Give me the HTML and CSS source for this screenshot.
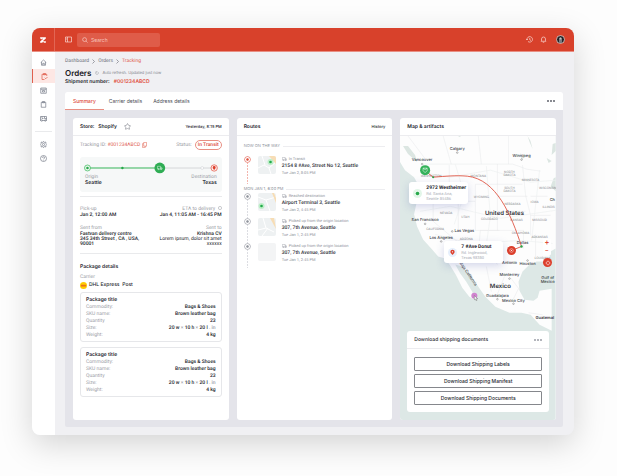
FILE: index.html
```html
<!DOCTYPE html>
<html lang="en">
<head>
<meta charset="utf-8">
<title>Orders</title>
<link rel="stylesheet" href="styles.css">
</head>
<body>
<svg class="defs" aria-hidden="true">
  <symbol id="truck" viewBox="0 0 16 12"><path d="M1 1h9v8H1zM10 4h3l2 3v2h-5"/><circle cx="4.500" cy="9.500" r="1.500"/><circle cx="12" cy="9.500" r="1.500"/></symbol>
  <symbol id="ring" viewBox="0 0 14 14"><circle cx="7" cy="7" r="6"/><circle cx="7" cy="7" r="2" fill="currentColor"/></symbol>
  <symbol id="pin" viewBox="0 0 12 14"><path d="M6 13C3 10 1 8 1 5.500a5 5 0 0 1 10 0C11 8 9 10 6 13z" fill="currentColor"/><circle cx="6" cy="5.500" r="1.500" fill="#fff" stroke="none"/></symbol>
</svg>
<div class="window">
  <header class="topbar">
    <a class="logo" href="#" aria-label="Home"><svg viewBox="0 0 14 14"><path d="M2 2h10v2.500L6.500 9H12v3h-3L7.500 10.500 5 12H2V9.500L7.500 5H5L4 6 2 4z" fill="#fff"/></svg></a>
    <button class="icon-btn" aria-label="Toggle sidebar"><svg viewBox="0 0 14 14"><path d="M1 2h12v10H1zM5 2v10M3 5h1M3 7h1"/></svg></button>
    <label class="search"><svg viewBox="0 0 14 14"><circle cx="6" cy="6" r="4.500"/><path d="M9.500 9.500 13 13"/></svg><input type="search" placeholder="Search" aria-label="Search"></label>
    <div class="actions">
      <button class="icon-btn" aria-label="History"><svg viewBox="0 0 14 14"><path d="M2 7a5.500 5.500 0 1 1 2 4M0 6l2 2 2-2M7.500 4v3.500L10 9"/></svg></button>
      <button class="icon-btn" aria-label="Notifications"><svg viewBox="0 0 14 14"><path d="M2 10.500h10L11 9V6a4 4 0 0 0-8 0v3zM5.500 12.500h3"/></svg></button>
      <button class="avatar" aria-label="Account"><svg viewBox="0 0 18 18"><circle cx="9" cy="9" r="8" fill="#222327" stroke="#f3d7d2" stroke-width="1.500"/><path d="M6 16V8a3 3 0 0 1 6 0v8" fill="#777a80"/><circle cx="9" cy="7" r="2" fill="#c4c4c4"/></svg></button>
    </div>
  </header>
  <div class="body">
    <nav class="sidebar" aria-label="Main">
      <a href="#" aria-label="Home"><svg viewBox="0 0 14 14"><path d="M1.500 7 7 2l5.500 5M3 6v6.500h8V6M5.500 12V8.500h3V12"/></svg></a>
      <a href="#" class="active" aria-label="Orders"><svg viewBox="0 0 14 14"><path d="M7 13H2V2.500h9.500V6M5 1h4v2.500H5zM7.500 9.500l2 2L13 8"/></svg></a>
      <a href="#" aria-label="Products"><svg viewBox="0 0 14 14"><path d="M1.500 2h11v10.500h-11zM1.500 4.500h11M5 7h4v3H5z"/></svg></a>
      <a href="#" aria-label="Lists"><svg viewBox="0 0 14 14"><path d="M2.500 2.500h9v10h-9zM5 1h4v2.500H5z"/></svg></a>
      <a href="#" aria-label="Shipping"><svg viewBox="0 0 14 14"><path d="M1 11V3h12v8h-2M5 11h4M1 11h1M9 3v4h4M4 3v4h3"/><circle cx="3.500" cy="11" r="1.500"/><circle cx="10.500" cy="11" r="1.500"/></svg></a>
      <hr>
      <a href="#" aria-label="Settings"><svg viewBox="0 0 14 14"><path d="M7 .8l1.500 2L11.500 2l.3 3L13.500 7l-1.700 2-.3 3-3-.8L7 13.200l-1.500-2-3 .8-.3-3L.5 7l1.700-2 .3-3 3 .8z"/><circle cx="7" cy="7" r="2.200"/></svg></a>
      <a href="#" aria-label="Help"><svg viewBox="0 0 14 14"><circle cx="7" cy="7" r="6"/><path d="M5 5.500a2 2 0 1 1 2.500 2L7 8.500M7 10v1"/></svg></a>
    </nav>
    <main>
      <nav class="crumbs" aria-label="Breadcrumb"><a href="#">Dashboard</a><svg viewBox="0 0 6 10"><path d="M1 1l4 4-4 4"/></svg><a href="#">Orders</a><svg viewBox="0 0 6 10"><path d="M1 1l4 4-4 4"/></svg><a href="#" class="here">Tracking</a></nav>
      <div class="title"><h1>Orders</h1><svg viewBox="0 0 14 14"><path d="M4 3a5 5 0 1 0 5-.5M4 0v4h4"/></svg><small>Auto refresh. Updated just now</small></div>
      <p class="shipment">Shipment number: <b>#001234ABCD</b></p>
      <section class="board">
        <div class="tabs"><button class="on">Summary</button><button>Carrier details</button><button>Address details</button><button class="more" aria-label="More"><i></i><i></i><i></i></button></div>
        <div class="columns">
          <article class="card">
            <header><h2>Store: &nbsp; Shopify</h2><svg class="star" viewBox="0 0 14 14"><path d="M7 1l2 3.500 4 1-2.500 3 .5 4L7 11l-4 1.500.5-4L1 5.500l4-1z"/></svg><time>Yesterday, 8:15 PM</time></header>
            <div class="store">
              <div class="row track"><span>Tracking ID: <a href="#">#001234ABCD</a></span><svg class="copy" viewBox="0 0 12 14"><path d="M4 1h7v9H4zM4 4H1v9h7v-3"/></svg><span class="status">Status: <b>In Transit</b></span></div>
              <div class="progress">
                <svg viewBox="0 0 142 12"><path d="M7 6h73" stroke="#35b558"/><path d="M80 6h54" stroke="#d5d8da"/><circle cx="7.500" cy="6" r="3" fill="#e8f8ec" stroke="#35b558" stroke-width=".7"/><circle cx="7.500" cy="6" r="1.300" fill="#27a84a"/><circle cx="42.500" cy="6" r="1.200" fill="#27a84a"/><circle cx="80" cy="6" r="5.400" fill="#2fad54"/><g class="wtruck"><use href="#truck" x="77" y="4" width="6" height="4"/></g><circle cx="122.500" cy="6" r="1.400" fill="#fff" stroke="#cfd2d5" stroke-width=".6"/><circle cx="134.500" cy="6" r="3.200" fill="#fdeeec" stroke="#e2503f" stroke-width=".7"/><path d="M134.500 8C133 6.500 133 6 133 5.500a1.500 1.500 0 0 1 3 0c0 .5 0 1-1.500 2.500z" fill="#dc3f2c"/></svg>
                <div class="ends"><div><span>Origin</span><strong>Seattle</strong></div><div class="right"><span>Destination</span><strong>Texas</strong></div></div>
              </div>
              <hr>
              <div class="pair"><div><span>Pick-up</span><b>Jan 2, 12:00 AM</b></div><div class="right"><span>ETA to delivery &nbsp;<svg class="info" viewBox="0 0 10 10"><circle cx="5" cy="5" r="4"/></svg></span><b>Jan 4, 11:05 AM - 16:45 PM</b></div></div>
              <div class="pair addr"><div><span>Sent from</span><b>Fastvan delivery centre<br>345 34th Street , CA , USA,<br>90001</b></div><div class="right"><span>Sent to</span><b>Krishna CV</b><p>Lorem ipsum, dolor sit amet<br>xxxxxx</p></div></div>
              <hr>
              <h3>Package details</h3>
              <p class="muted">Carrier</p>
              <p class="carrier"><svg viewBox="0 0 14 14"><circle cx="7" cy="7" r="7" fill="#ffcc00"/><path d="M2 6.500h10M2 8h10" stroke="#e0432f"/></svg>DHL Express &nbsp;Post</p>
              <section class="package"><h4>Package title</h4><dl><dt>Commodity:</dt><dd>Bags &amp; Shoes</dd><dt>SKU name:</dt><dd>Brown leather bag</dd><dt>Quantity</dt><dd>23</dd><dt>Size:</dt><dd>20 w <i>×</i> 10 h <i>×</i> 20 l <i>. in</i></dd><dt>Weight:</dt><dd>4 kg</dd></dl></section>
              <section class="package"><h4>Package title</h4><dl><dt>Commodity:</dt><dd>Bags &amp; Shoes</dd><dt>SKU name:</dt><dd>Brown leather bag</dd><dt>Quantity</dt><dd>23</dd><dt>Size:</dt><dd>20 w <i>×</i> 10 h <i>×</i> 20 l <i>. in</i></dd><dt>Weight:</dt><dd>4 kg</dd></dl></section>
            </div>
          </article>
          <article class="card">
            <header><h2>Routes</h2><a href="#" class="history">History</a></header>
            <div class="routes">
              <h3>NOW ON THE WAY</h3>
              <ol>
                <li class="current"><svg class="dot" viewBox="0 0 14 14"><use href="#ring"/></svg><svg class="thumb" viewBox="0 0 18 18"><rect width="18" height="18" fill="#eef1f2"/><path d="M0 12l6-3 5 3 7-6M7 9L4 0M11 12l2 6" class="road"/><path d="M11 0h7v8z" fill="#f7ddb5"/><circle cx="12.500" cy="6" r="3" fill="#bdeec8"/><circle cx="12.500" cy="6" r="1.300" fill="#20aa48"/></svg><div><span><svg class="tr"><use href="#truck"/></svg>In Transit</span><b>2154 8 #Ave, Street No 12, Seattle</b><time>Tue Jan 2, 8:05 PM</time></div></li>
              </ol>
              <h3>MON JAN 1, 6:00 PM</h3>
              <ol>
                <li><svg class="dot" viewBox="0 0 14 14"><use href="#ring"/></svg><svg class="thumb" viewBox="0 0 18 18"><rect width="18" height="18" fill="#eef1f2"/><path d="M0 4l8 3 10-3M8 7l4 11" class="road"/><path d="M14 0h2l2 5v5z" fill="#f7ddb5"/><circle cx="3.500" cy="13" r="3" fill="#bdeec8"/><circle cx="3.500" cy="13" r="1.300" fill="#20aa48"/></svg><div><span><svg class="tr"><use href="#truck"/></svg>Reached destination</span><b>Airport Terminal 3, Seattle</b><time>Tue Jan 2, 4:45 PM</time></div></li>
                <li><svg class="dot" viewBox="0 0 14 14"><use href="#ring"/></svg><svg class="thumb" viewBox="0 0 18 18"><rect width="18" height="18" fill="#eef1f2"/><path d="M0 12l8-2 8 4M8 10L5 0M4 18l6-8" class="road"/><path d="M12 0h4l2 11z" fill="#f7ddb5"/></svg><div><span><svg class="tr"><use href="#truck"/></svg>Picked up from the origin location</span><b>307, 7th Avenue, Seattle</b><time>Tue Jan 1, 2:45 PM</time></div></li>
                <li><svg class="dot" viewBox="0 0 14 14"><use href="#ring"/></svg><svg class="thumb" viewBox="0 0 18 18"><rect width="18" height="18" fill="#f3f4f5"/></svg><div><span><svg class="tr"><use href="#truck"/></svg>Picked up from the origin location</span><b>307, 7th Avenue, Seattle</b><time>Tue Jan 1, 2:45 PM</time></div></li>
              </ol>
            </div>
          </article>
          <article class="card">
            <header><h2>Map &amp; artifacts</h2></header>
            <div class="map">
              <svg class="canvas" viewBox="0 0 155 284" preserveAspectRatio="xMidYMin slice" role="img" aria-label="Route from Washington to Texas">
                <rect width="155" height="284" fill="#dde8e6"/>
                <path fill="#fdfdfd" d="M0 0H155V112l-7 4 2 6-8 3-6 0-8 4-6 6-4 10 1 9 5 9 9 1 4-3 2-7 12-2v42l-12-6-9-10-9-2-12 0-14-6-10-10-7-10-8-12-8-8-7-2 5 9 6 8 6 10 2 8-5-3-7-9-6-12-6-10-5-7-7-2-6-7-9-10-6-13-3-12 4-18 1-10-5-9-9-7-5-8z"/>
                <path fill="#dce6e2" d="M152 8l3-1v8l-4 4zM127 0l3 5 2 8-3-7zM120 17l3 5-2 2zM150 50l3-8 2-1v14zM58 0h3l-2 1zM3 10l5 8 9 8-2-7-7-9zM146 22l5 3-3 2z"/>
                <g fill="none" stroke="#e1e4e5" stroke-width=".4"><path d="M23 28H112l6 2 8 3 14 2M30 53h19v-24M49 53v12H20M33 65v20l24 20M58 65v29M49 65h26V48h22M75 65v29h24M97 28v66M97 48h25M97 60h30M99 75h26M80 94h43M122 29l3 30 5 20v20M130 60h17M130 79h20M123 94v18M80 94l-2 22-19 2M80 116h9l8 12M135 98v23M8 0l18 24M43 0l8 28M78 0l3 28M108 0v28M86 130l5 25M104 140l-8 20M110 141l9 12M112 164l6-12M128 176l14 2"/></g>
                <g fill="none" stroke="#eef0f0" stroke-width=".7"><path d="M20 36l30 5 40-7 40 12 25-2M20 75l30-5 50 12 55-8M35 98l35 9 50-3 32 3M55 28l9 30-10 30M86 30l4 50-5 35M139 34l-8 70"/></g>
                <g class="state"><text x="31" y="41">WASHINGTON</text><text x="78" y="41">MONTANA</text><text x="109" y="37">NORTH</text><text x="109" y="40">DAKOTA</text><text x="130" y="45">MINNESOTA</text><text x="109" y="53">SOUTH</text><text x="109" y="56">DAKOTA</text><text x="81" y="62">WYOMING</text><text x="112" y="69">NEBRASKA</text><text x="134" y="67">IOWA</text><text x="147" y="53">WISCONSIN</text><text x="148" y="72">ILLINOIS</text><text x="46" y="78">NEVADA</text><text x="65" y="82">UTAH</text><text x="89" y="84">COLORADO</text><text x="116" y="85">KANSAS</text><text x="139" y="85">MISSOURI</text><text x="35" y="94">CALIFORNIA</text><text x="66" y="104">ARIZONA</text><text x="120" y="98">OKLAHOMA</text><text x="139" y="102">ARKANSAS</text><text x="142" y="122">LOUISIANA</text></g>
                <g class="city"><text x="57" y="14">Calgary</text><text x="121" y="21">Winnipeg</text><text x="22" y="25">Vancouver</text><text x="149" y="65" class="start">Ch</text><text x="25" y="85">San Francisco</text><text x="64" y="96">Las Vegas</text><text x="41" y="103">Los Angeles</text><text x="122" y="108">Dallas</text><text x="109" y="127">Antonio</text><text x="127" y="128">Houston</text><text x="109" y="139">Monterrey</text><text x="97" y="160">Guadalajara</text><text x="113" y="165">Mexico City</text><text x="147" y="142">Gulf of</text><text x="147" y="146">Mexico</text><text x="135" y="182" class="bold start">Guatemal</text><text transform="translate(67 138) rotate(56)">Baja California</text></g>
                <g class="country"><text x="104" y="79">United States</text><text x="100" y="151">Mexico</text></g>
                <g fill="#fff" stroke="#777" stroke-width=".5"><circle cx="57" cy="16.500" r=".8"/><circle cx="121" cy="23.500" r=".8"/><circle cx="22" cy="28" r=".8"/><circle cx="25" cy="87.500" r=".8"/><circle cx="52" cy="95" r=".8"/><circle cx="41" cy="105" r=".8"/><circle cx="127" cy="124" r=".8"/><circle cx="109" cy="142" r=".8"/><circle cx="97" cy="162.500" r=".8"/><circle cx="113" cy="167" r=".8"/></g>
                <path d="M28 37l5 4C47 40 55 39 67 40 96 43 111 79 121 110l-10 4" fill="none" stroke="#df5545" stroke-width=".9"/>
                <circle cx="33" cy="41" r="1" fill="#27a84a"/><circle cx="121" cy="110" r="1.200" fill="#27a84a"/>
                <circle cx="25" cy="34" r="5" fill="#35b25a"/><path d="M23 32h4v2.500l-2 2-2-2zM23 32l2 1.500 2-1.500" fill="none" stroke="#e8f8ec" stroke-width=".6"/>
                <circle cx="111" cy="114" r="4.500" fill="#dc3f2c"/><circle cx="111" cy="114" r="1.800" fill="none" stroke="#f8c6bf" stroke-width=".6"/><circle cx="111" cy="114" r=".6" fill="#fff"/>
                <circle cx="74" cy="159" r="3" fill="#d184cf"/><path d="M74 159v4l1-.7.8 1.700.8-.4-.7-1.600h1.500z" fill="#fff" stroke="#555" stroke-width=".4"/>
              </svg>
              <div class="place from"><svg viewBox="0 0 14 14"><circle cx="7" cy="7" r="7" fill="#e2f6e8"/><circle cx="7" cy="7" r="2.800" fill="#27a84a"/></svg><div><b>2972 Westheimer</b><span>Rd. Santa Ana,<br>Seattle 85486</span></div></div>
              <div class="place to"><svg viewBox="0 0 14 14"><circle cx="7" cy="7" r="7" fill="#e6effc"/><use href="#pin" x="3" y="2" width="8" height="10" color="#dc3f2c"/></svg><div><b>7 #Ave Donut</b><span>Rd. Inglewood,<br>Texas 98380</span></div></div>
              <div class="controls"><button aria-label="Zoom in">+</button><button aria-label="Zoom out">−</button></div>
              <button class="locate" aria-label="Locate"><svg viewBox="0 0 14 14"><circle cx="7" cy="7" r="4"/><path d="M7 1v4M7 9v4M1 7h4M9 7h4"/></svg></button>
              <section class="docs"><header><h3>Download shipping documents</h3><button class="more" aria-label="More"><i></i><i></i><i></i></button></header><div class="doclist"><button>Download Shipping Labels</button><button>Download Shipping Manifest</button><button>Download Shipping Documents</button></div></section>
            </div>
          </article>
        </div>
      </section>
    </main>
  </div>
</div>
</body>
</html>
```
FILE: styles.css
```css
* { box-sizing: border-box; }
body { margin: 0; min-height: 100vh; display: flex; padding: 28px 43px 41px 32px; background: #fdfdfd; font: 5px/6px Roboto, "Liberation Sans", sans-serif; color: #25262d; text-rendering: geometricPrecision; }
h1, h2, h3, h4, p, ol, dl, dd { margin: 0; padding: 0; }
a { color: inherit; text-decoration: none; }
button { font: inherit; color: inherit; border: 0; background: none; padding: 0; }
svg { display: block; fill: none; stroke: currentColor; stroke-width: 1.3; flex: none; }
symbol { overflow: visible; }
.defs { position: absolute; width: 0; height: 0; }
hr { border: 0; border-top: 1px solid #e9eaec; margin: 0; }
h1, h2, h3, h4, .shipment, .tabs, .carrier, .doclist, .title small, .ends strong { font-family: Inter, "Liberation Sans", sans-serif; }

.window { flex: 1; min-width: 0; display: flex; flex-direction: column; border-radius: 8px; overflow: hidden; background: #f0f0f3; box-shadow: 0 9px 32px rgba(0, 0, 0, .17); }
.topbar { height: 24px; display: flex; align-items: center; background: #d8412b; color: #fbe3df; border-bottom: 1px solid #e88f83; }
.logo { width: 23px; height: 100%; display: grid; place-items: center; border-right: 1px solid #e26654; }
.logo svg { width: 8px; stroke: none; }
.icon-btn svg { width: 7px; }
.topbar > .icon-btn { margin: 0 5px 0 10px; }
.search { display: flex; align-items: center; gap: 3px; width: 83px; height: 14px; padding: 0 5px; border-radius: 2px; background: #df5c49; }
.search svg { width: 6px; }
.search input { width: 100%; min-width: 0; border: 0; padding: 0; outline: 0; background: none; font: 5px/8px Inter, sans-serif; color: #fff; }
.search input::placeholder { color: #f6c4bc; opacity: 1; }
.actions { margin-left: auto; margin-right: 9px; display: flex; align-items: center; gap: 7px; }
.avatar { margin-left: 2px; }
.avatar svg { width: 9px; stroke: none; }

.body { flex: 1; display: flex; }
.sidebar { width: 23px; padding-top: 3px; background: #fff; color: #6c7380; display: flex; flex-direction: column; }
.sidebar a { height: 14px; display: grid; place-items: center; }
.sidebar svg { width: 7px; }
.sidebar .active { background: #fde7e4; color: #dc4a38; border-left: 1px solid #e0604f; }
.sidebar hr { margin: 6px 3px 5px; }
main { flex: 1; min-width: 0; padding: 6px 11px 8px 10px; display: flex; flex-direction: column; }
.crumbs { display: flex; align-items: center; gap: 3px; color: #6d707a; }
.crumbs svg { width: 3px; }
.crumbs .here { color: #e0604f; }
.title { display: flex; align-items: center; gap: 4px; margin-top: 4px; color: #7f828b; }
.title h1 { font-size: 8px; line-height: 10px; font-weight: 600; color: #17181d; }
.title svg { width: 4px; margin-right: -1px; }
.title small { font-size: 4px; }
.shipment { font-weight: 600; line-height: 8px; }
.shipment b { color: #e0503f; font-weight: 600; margin-left: 3px; }

.board { flex: 1; margin-top: 6px; border-radius: 2px; overflow: hidden; background: #e4e4ea; display: flex; flex-direction: column; }
.tabs { display: flex; gap: 11px; height: 18px; background: #fff; color: #4c4e57; padding-right: 8px; }
.tabs .on { color: #dc4a38; font-weight: 500; padding: 0 8px; margin-right: -6px; border-bottom: 1px solid #e88f83; }
.more { margin-left: auto; display: flex; gap: 1px; align-items: center; }
.more i { width: 2px; height: 2px; border-radius: 50%; background: #60636c; }
.columns { flex: 1; display: grid; grid-template-columns: repeat(3, minmax(0, 1fr)); gap: 8px; padding: 8px 7px 7px 8px; }
.card { background: #fff; border-radius: 3px; overflow: hidden; display: flex; flex-direction: column; }
.card > header { height: 18px; flex: none; display: flex; align-items: center; padding: 0 7px; border-bottom: 1px solid #ececef; }
h2 { font-size: 5px; font-weight: 600; }
.star { width: 7px; margin-left: 7px; color: #8b8e96; }
header time, .history { margin-left: auto; font: 500 4px/6px Inter, sans-serif; }

.store { padding: 4px 7px; }
.row { display: flex; align-items: center; }
.track { height: 10px; color: #979aa2; margin-bottom: 7px; }
.track a, .copy { color: #e0604f; }
.copy { width: 5px; margin-left: 2px; }
.status { margin-left: auto; display: flex; align-items: center; gap: 3px; }
.status b { color: #dc4a38; font-weight: 500; border: 1px solid #e88f83; border-radius: 5px; padding: 1px 2px; }
.progress { height: 35px; padding-top: 5px; background: #f6f8f8; border-radius: 3px; }
.progress > svg { width: 100%; stroke: none; }
.progress > svg path { stroke-width: 1; }
.wtruck { color: #fff; stroke: #fff; }
.ends, .pair { display: flex; justify-content: space-between; }
.ends { padding: 0 5px; }
.ends div, .pair div { display: flex; flex-direction: column; }
.ends span, .pair span { color: #9b9ea6; }
.ends strong { font-weight: 600; }
.right { align-items: flex-end; text-align: right; }
.progress + hr { margin: 4px 0 9px; }
.pair b { font-weight: 500; }
.info { display: inline-block; width: 4px; }
.addr { margin: 7px 0 6px; }
.addr b, .addr p { line-height: 5px; }
.addr span { margin-bottom: 1px; }
h3 { font-size: 5px; font-weight: 600; }
.store h3 { margin-top: 10px; }
.muted { color: #9b9ea6; margin-top: 4px; }
.carrier { display: flex; align-items: center; gap: 2px; font-weight: 500; height: 8px; margin: 1px 0 3px; }
.carrier svg { width: 7px; stroke: none; }
.package { border: 1px solid #e6e7ea; border-radius: 3px; padding: 4px 5px 2px; margin-bottom: 5px; }
.package h4 { font-size: 5px; font-weight: 600; line-height: 7px; }
.package dl { display: grid; grid-template-columns: auto 1fr; line-height: 7px; }
.package dt, .package i { color: #9b9ea6; font-style: normal; }
.package dd { text-align: right; font-weight: 500; }

.routes { padding: 7px; color: #90939c; font-size: 4px; }
.routes h3 { display: flex; align-items: center; gap: 3px; font-size: 4px; font-weight: 400; }
.routes h3::after { content: ""; flex: 1; border-top: 1px solid #ededf0; }
.routes ol { list-style: none; }
.routes li { display: flex; height: 25px; background: repeating-linear-gradient(#dcdde2 0 2px, #fff 2px 3px) 3px 0 / 1px 100% no-repeat; }
.routes .current { height: 28px; background-image: repeating-linear-gradient(#f3b5ad 0 2px, #fff 2px 3px); }
.routes h3 + ol { margin-top: 7px; }
.routes ol + h3 { margin-top: 2px; }
.routes h3:last-of-type + ol { margin-top: 1px; }
.dot { width: 7px; height: 7px; margin-right: 7px; background: #fff; border-radius: 50%; }
.current .dot { color: #e0503f; }
.thumb { width: 18px; height: 18px; margin-right: 6px; border-radius: 2px; stroke: none; }
.road { stroke: #fff; stroke-width: 1; }
.routes li span { display: flex; align-items: center; gap: 2px; }
.routes li b { display: block; font-size: 5px; line-height: 8px; font-weight: 500; color: #30323a; white-space: nowrap; }
.routes time { display: block; }
.tr { width: 5px; height: 4px; }

.map { position: relative; flex: 1; display: flex; flex-direction: column; justify-content: flex-end; padding: 7px 7px 8px; overflow: hidden; }
.canvas { position: absolute; inset: 0; width: 100%; height: 100%; stroke: none; font-family: Inter, sans-serif; }
.canvas text { text-anchor: middle; }
.canvas .start { text-anchor: start; }
.state { font-size: 3px; fill: #7f8489; }
.city { font-size: 4px; fill: #404348; font-weight: 500; }
.country { font-size: 6px; font-weight: 600; fill: #303238; }
.bold { font-weight: 600; fill: #303238; }
.place { position: absolute; display: flex; align-items: center; gap: 4px; width: 59px; height: 22px; padding: 0 4px; border-radius: 3px; background: #fff; box-shadow: 0 3px 9px rgba(70, 80, 170, .22); line-height: 5px; }
.place svg { width: 9px; stroke: none; }
.place b { display: block; font-weight: 700; line-height: 6px; white-space: nowrap; }
.place span { display: block; color: #a9acb5; font-size: 4px; }
.from { left: 9px; top: 46px; }
.to { left: 44px; top: 105px; }
.controls { position: absolute; right: 5px; top: 103px; width: 8px; display: grid; background: #fff; border-radius: 1px; color: #dc4a38; font-size: 7px; font-weight: 500; line-height: 8px; }
.locate { position: absolute; right: 4px; top: 122px; width: 9px; height: 9px; border-radius: 50%; background: #dc3f2c; color: #f8c6bf; display: grid; place-items: center; }
.locate svg { width: 6px; }
.docs { position: relative; background: #fff; border-radius: 3px; }
.docs header { display: flex; align-items: center; height: 18px; padding: 0 7px; border-bottom: 1px solid #ececef; }
.docs h3 { font-weight: 500; }
.docs .more i { background: #9a9da6; }
.doclist { display: grid; gap: 3px; padding: 8px 7px 7px; }
.doclist button { height: 14px; border: 1px solid #85878c; border-radius: 1px; font-weight: 500; }
```
